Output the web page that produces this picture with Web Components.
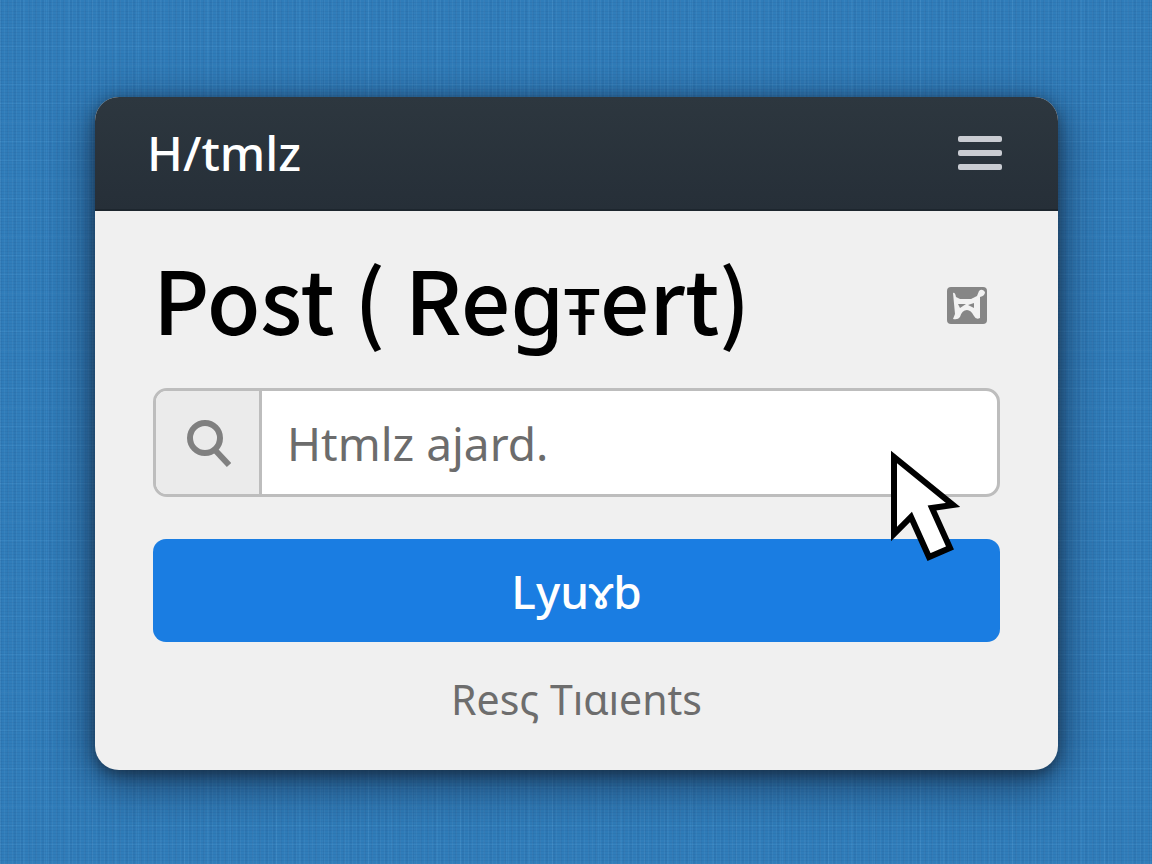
<!DOCTYPE html>
<html lang="en">
<head>
<meta charset="utf-8">
<meta name="viewport" content="width=device-width, initial-scale=1">
<title>H/tmlz</title>
<style>
  html, body { margin: 0; min-height: 100%; }
  body {
    --ui: "Noto Sans", "Open Sans", sans-serif;
    font-family: var(--ui);
    background-color: #307dba;
    background-image:
      repeating-linear-gradient(90deg, rgba(255,255,255,.04) 0 1px, transparent 1px 4px),
      repeating-linear-gradient(0deg, rgba(0,20,60,.05) 0 1px, transparent 1px 3px),
      repeating-linear-gradient(90deg, rgba(120,200,255,.09) 0 1px, transparent 1px 23px),
      repeating-linear-gradient(0deg, rgba(120,200,255,.09) 0 1px, transparent 1px 19px),
      repeating-linear-gradient(90deg, rgba(0,30,80,.05) 0 2px, transparent 2px 7px);
  }
  .round { font-family: "Noto Sans", sans-serif; }
  .small { font-family: "Noto Sans", sans-serif; font-size: 64px; line-height: 64px; }
</style>
</head>
<body>
<post-page>
  <app-header slot="header">H/tmlz</app-header>
  <post-heading>Post ( Re<span class="round">g</span><span class="small">Ŧ</span>ert)</post-heading>
  <search-field value="Htmlz ajard."></search-field>
  <submit-button>Lyuɤb</submit-button>
  <foot-link>Resς Tıɑıents</foot-link>
</post-page>
<script>
  const define = (name, html, setup) => {
    const template = document.createElement('template');
    template.innerHTML = html;
    customElements.define(name, class extends HTMLElement {
      constructor() {
        super();
        this.attachShadow({ mode: 'open' }).append(template.content.cloneNode(true));
      }
      connectedCallback() { if (setup) setup(this); }
    });
  };

  define('post-page', `
    <style>
      :host { display: block; padding: 97px 94px 94px 95px; }
      main {
        border-radius: 24px; background: #f0f0f0;
        box-shadow: 0 4px 14px rgba(20,35,50,.6), 0 12px 48px rgba(20,45,75,.85);
      }
      section { display: flex; flex-direction: column; padding: 30px 58px 42px; }
    </style>
    <main>
      <slot name="header"></slot>
      <section><slot></slot></section>
    </main>`);

  define('app-header', `
    <style>
      :host { display: block; }
      header {
        display: flex; align-items: center; justify-content: space-between;
        height: 114px; padding: 0 56px 0 52px; box-sizing: border-box;
        color: #fff; font-size: 48px; font-weight: 500; line-height: 64px;
        background: linear-gradient(#2d373f, #262f38);
        border-bottom: 2px solid #1d262e; border-radius: 24px 24px 0 0;
      }
      button { display: flex; padding: 0; border: 0; background: none; cursor: pointer; }
    </style>
    <header>
      <span><slot></slot></span>
      <button aria-label="Menu">
        <svg width="44" height="34" viewBox="0 0 44 34" fill="#c9ccd2">
          <rect width="44" height="6" rx="2"/><rect y="14" width="44" height="6" rx="2"/><rect y="28" width="44" height="6" rx="2"/>
        </svg>
      </button>
    </header>`);

  define('post-heading', `
    <style>
      :host { display: flex; align-items: flex-start; justify-content: space-between; padding-right: 13px; height: 122px; }
      h1 {
        margin: 0; color: #000; white-space: nowrap;
        font: 500 87px/112px "Noto Sans CJK SC", "Noto Sans", sans-serif;
      }
      svg { display: block; margin-top: 46px; }
    </style>
    <h1><slot></slot></h1>
    <svg width="40" height="37" viewBox="0 0 40 37" aria-hidden="true">
      <rect width="40" height="37" rx="4" fill="#868686"/>
      <path d="M6 6 Q8 5 9 10 L13 12 H24 L30 9 L32 4 Q35 1 38 5 Q38 9 33 10 L33 31 Q29 33 27 29 Q24 23 20 23 Q15 23 13 30 Q11 33 6 32 L8 27 Z" fill="#f2f2f2"/>
      <path d="M11 17 L19 17 L13 21 Z M21 18 L27 16 V21 Z" fill="#868686"/>
    </svg>`);

  define('search-field', `
    <style>
      :host { display: block; position: relative; margin-top: 25px; }
      label {
        display: flex; height: 109px; box-sizing: border-box; overflow: hidden;
        border: 3px solid #bdbdbd; border-radius: 14px; background: #fff;
      }
      .icon {
        display: flex; align-items: center; justify-content: center;
        width: 106px; box-sizing: border-box; flex: none;
        background: #ebebeb; border-right: 3px solid #bdbdbd;
      }
      input {
        flex: 1; min-width: 0; padding: 0 25px; border: 0; outline: 0; background: none;
        font: 400 46px/64px var(--ui); color: #6c6c6c;
      }
      .pointer { position: absolute; right: 40px; top: 61px; z-index: 1; pointer-events: none; }
    </style>
    <label>
      <span class="icon">
        <svg width="46" height="50" viewBox="0 0 46 50" fill="none" stroke="#808080" stroke-width="6" aria-hidden="true">
          <circle cx="20" cy="20" r="15"/><path d="M30 32 L44 47"/>
        </svg>
      </span>
      <input type="text" aria-label="Search">
    </label>
    <svg class="pointer" width="70" height="112" viewBox="0 0 70 112" aria-hidden="true">
      <path d="M4 8 V85 L21 68 L39 108 L60 99 L42 59 L63 56 Z" fill="#fff" stroke="#000" stroke-width="6"/>
    </svg>`,
    host => { host.shadowRoot.querySelector('input').value = host.getAttribute('value') || ''; });

  define('submit-button', `
    <style>
      :host { display: block; margin-top: 42px; }
      button {
        display: block; width: 100%; height: 103px; padding: 0; border: 0; border-radius: 13px;
        background: #1a7de2; color: #fff; cursor: pointer;
        font: 500 46px/64px var(--ui);
      }
    </style>
    <button type="submit"><slot></slot></button>`);

  define('foot-link', `
    <style>
      :host { display: block; height: 58px; margin-top: 28px; text-align: center; }
      a { font-size: 41px; line-height: 58px; color: #6d6d6d; text-decoration: none; }
    </style>
    <a href="#"><slot></slot></a>`);
</script>
</body>
</html>
